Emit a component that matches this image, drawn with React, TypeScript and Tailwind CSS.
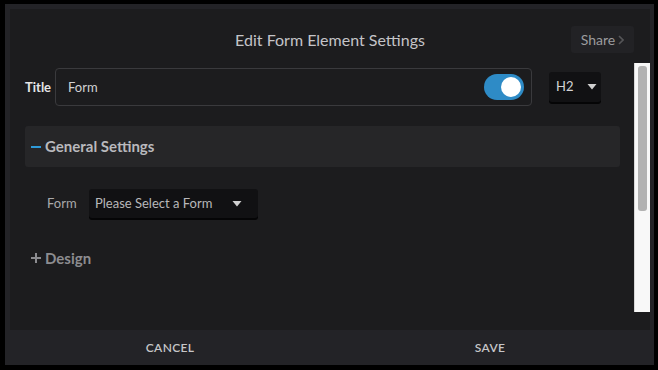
import React from 'react';

const font = { fontFamily: 'Lato, "Open Sans", sans-serif' };

const Caret: React.FC = () => (
  <svg width="10" height="6" viewBox="0 0 10 6" className="fill-[#d0d0d0]">
    <path d="M0.5 0 L9.5 0 L5 5.5 Z" />
  </svg>
);

export default function App() {
  return (
    <div
      className="w-[658px] h-[370px] bg-black pt-[4px] pl-[5px] pr-[4px] pb-[5px] overflow-hidden"
      style={font}
    >
      <div className="h-full flex flex-col bg-[#232327]">
        {/* Body */}
        <div className="flex-1 flex flex-col mt-[5px] ml-[5px] mr-[4px] bg-[#1c1c1e]">
          {/* Header */}
          <div className="h-[54px] relative flex items-start justify-center pt-[21px]">
            <h1 className="text-[16px] leading-[20px] text-[#c4c4c8]">Edit Form Element Settings</h1>
            <button className="absolute right-[16px] top-[17px] h-[27px] w-[63px] rounded-[3px] bg-[#222225] flex items-center justify-center gap-[3px] text-[14px] text-[#9c9c9e]">
              Share
              <svg width="6" height="10" viewBox="0 0 6 10" className="stroke-[#555558]" fill="none" strokeWidth="1.6">
                <path d="M1 1 L5 5 L1 9" />
              </svg>
            </button>
          </div>

          {/* Scroll area */}
          <div className="h-[249px] flex">
            <div className="flex-1 pl-[15px] pr-[14px] pt-[5px]">
              <div className="flex items-center">
                <span className="w-[30px] pt-[2px] text-[13px] font-bold text-[#e4e4e6]">Title</span>
                <div className="w-[477px] h-[38px] rounded-[4px] border border-[#3a3a3d] flex items-center justify-between pl-[12px] pr-[7px]">
                  <span className="pt-[1px] text-[13px] text-[#d2d2d4]">Form</span>
                  <div className="w-[40px] h-[26px] rounded-full bg-[#2e8bc6] flex items-center justify-end pr-[3px]">
                    <div className="w-[20px] h-[20px] rounded-full bg-white" />
                  </div>
                </div>
                <div className="ml-[17px] w-[52px] h-[30px] rounded-[3px] bg-[#111113] shadow-[0_2px_0_#050506] flex items-center justify-between pl-[7px] pr-[4px]">
                  <span className="text-[13px] text-[#d4d4d6]">H2</span>
                  <Caret />
                </div>
              </div>

              <div className="mt-[20px] h-[41px] rounded-[3px] bg-[#262628] flex items-center pl-[6px]">
                <span className="w-[10px] h-[2px] bg-[#2e9ad8] mr-[4px]" />
                <span className="text-[15px] font-bold text-[#b9b9bd]">General Settings</span>
              </div>

              <div className="mt-[22px] flex items-center pl-[22px]">
                <span className="w-[42px] text-[13px] text-[#a9a9ab]">Form</span>
                <div className="w-[169px] h-[29px] rounded-[3px] bg-[#111113] shadow-[0_2px_0_#050506] flex items-center justify-between pl-[6px] pr-[16px]">
                  <span className="text-[13px] text-[#b8b8ba]">Please Select a Form</span>
                  <Caret />
                </div>
              </div>

              <div className="mt-[29px] flex items-center pl-[6px] text-[15px] font-bold text-[#8c8c90]">
                <svg width="10" height="10" viewBox="0 0 10 10" className="mr-[4px] stroke-[#8c8c90]" strokeWidth="2">
                  <path d="M0 5 H10 M5 0 V10" />
                </svg>
                Design
              </div>
            </div>

            {/* Scrollbar */}
            <div className="w-[16px] h-full bg-[#f8f8f8] border-l border-[#d8d8d8] pt-[3px] pl-[3px]">
              <div className="w-[9px] h-[145px] rounded-[3px] bg-[#b2b2b2]" />
            </div>
          </div>
        </div>

        {/* Footer */}
        <div className="h-[35px] flex pl-[5px] pr-[4px]">
          <button className="flex-1 text-[12px] font-semibold tracking-[0.3px] text-[#c6c6c8]">CANCEL</button>
          <button className="flex-1 text-[12px] font-semibold tracking-[0.3px] text-[#c6c6c8]">SAVE</button>
        </div>
      </div>
    </div>
  );
}
